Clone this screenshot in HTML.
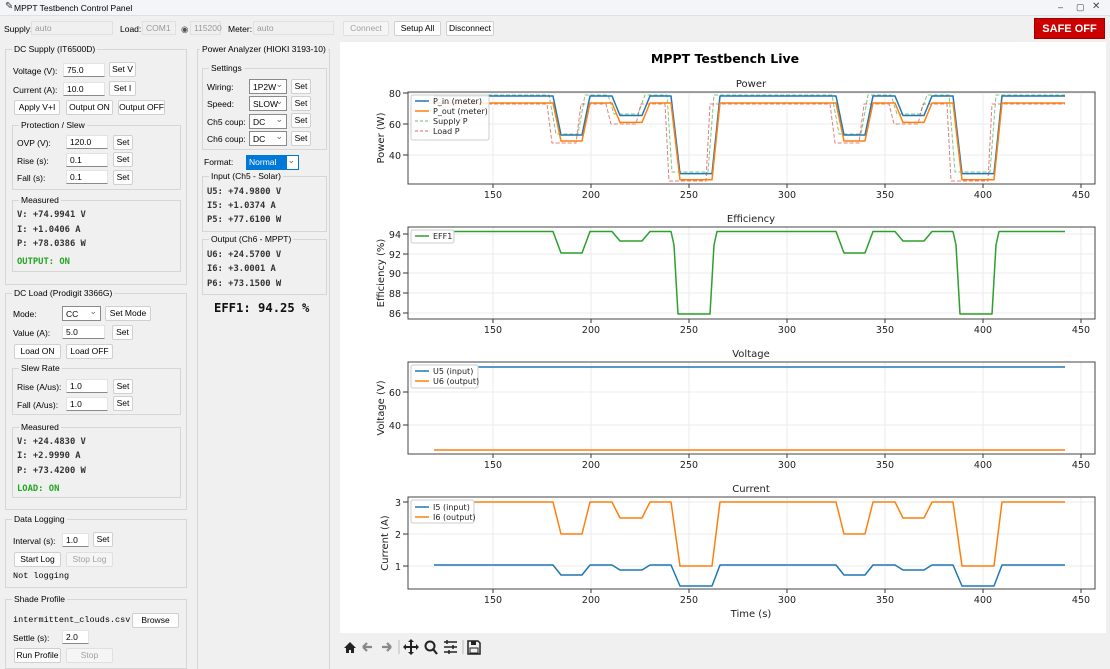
<!DOCTYPE html>
<html><head><meta charset="utf-8"><style>
*{box-sizing:border-box}
body{margin:0;width:1110px;height:663px;overflow:hidden;background:#f0f0f0;font-family:"Liberation Sans",sans-serif;font-size:8.5px;color:#000;position:relative}
div,span{position:absolute;white-space:nowrap}
.l{line-height:10px}
.e{background:#fff;border:1px solid #e3e3e3;border-bottom:1px solid #8a8a8a;height:14px;padding:1px 3px;line-height:11px}
.b{background:#fdfdfd;border:1px solid #d0d0d0;border-radius:2px;height:15px;text-align:center;line-height:13px}
.b.d{color:#a0a0a0;background:#f5f5f5;border-color:#e0e0e0}
.c{background:#fff;border:1px solid #8a8a8a;height:15px;padding:1px 3px;line-height:12px}
.c:after{content:"⌄";position:absolute;right:3px;top:-2px;color:#666;font-size:9px}
.f{border:1px solid #d6d6d6}
.t{background:#f0f0f0;padding:0 2px;line-height:10px;top:-6px;left:6px}
.m{font-family:"DejaVu Sans Mono","Liberation Mono",monospace;font-size:8.8px;font-weight:bold;color:#333;line-height:12px}
.g{color:#1fa51f;font-family:"DejaVu Sans Mono","Liberation Mono",monospace;font-weight:bold;font-size:8.8px}
.ro{background:#f0f0f0;border:1px solid #e0e0e0;height:14px;color:#999;padding:1px 3px;line-height:11px}
</style></head><body>
<div style="left:0;top:0;width:1110px;height:16px;background:#f3f5f9;border-bottom:1px solid #e0e0e0"></div>
<div class="l" style="left:5px;top:2px;font-size:10px;color:#333">✎</div>
<div class="l" style="left:14px;top:3px;font-size:8.5px">MPPT Testbench Control Panel</div>
<div class="l" style="left:1058px;top:2px;font-size:9px;color:#444">–</div>
<div class="l" style="left:1076px;top:2px;font-size:9px;color:#444">▢</div>
<div class="l" style="left:1092px;top:2px;font-size:10px;color:#444">✕</div>

<div class="l" style="left:4px;top:24px">Supply:</div><div class="ro" style="left:31px;top:21px;width:82px">auto</div>
<div class="l" style="left:120px;top:24px">Load:</div><div class="ro" style="left:142px;top:21px;width:34px">COM1</div>
<div class="l" style="left:181px;top:24px;color:#555">◉</div><div class="ro" style="left:190px;top:21px;width:31px">115200</div>
<div class="l" style="left:228px;top:24px">Meter:</div><div class="ro" style="left:253px;top:21px;width:81px">auto</div>
<div class="b d" style="left:343px;top:21px;width:46px">Connect</div>
<div class="b" style="left:394px;top:21px;width:47px">Setup All</div>
<div class="b" style="left:446px;top:21px;width:48px">Disconnect</div>
<div style="left:1034px;top:18px;width:71px;height:21px;background:#cc0000;color:#fff;font-weight:bold;font-size:11px;text-align:center;line-height:20px;border:1px solid #900">SAFE OFF</div>

<div class="f" style="left:5px;top:49px;width:182px;height:236px"><span class="t">DC Supply (IT6500D)</span></div>
<div class="l" style="left:13px;top:66px">Voltage (V):</div><div class="e" style="left:63px;top:63px;width:42px">75.0</div><div class="b" style="left:109px;top:62px;width:27px">Set V</div>
<div class="l" style="left:13px;top:85px">Current (A):</div><div class="e" style="left:63px;top:82px;width:42px">10.0</div><div class="b" style="left:109px;top:81px;width:27px">Set I</div>
<div class="b" style="left:14px;top:100px;width:46px">Apply V+I</div><div class="b" style="left:66px;top:100px;width:47px">Output ON</div><div class="b" style="left:118px;top:100px;width:47px">Output OFF</div>
<div class="f" style="left:12px;top:125px;width:169px;height:65px"><span class="t">Protection / Slew</span></div>
<div class="l" style="left:17px;top:138px">OVP (V):</div><div class="e" style="left:66px;top:135px;width:42px">120.0</div><div class="b" style="left:113px;top:135px;width:20px">Set</div>
<div class="l" style="left:17px;top:156px">Rise (s):</div><div class="e" style="left:66px;top:153px;width:42px">0.1</div><div class="b" style="left:113px;top:152px;width:20px">Set</div>
<div class="l" style="left:17px;top:173px">Fall (s):</div><div class="e" style="left:66px;top:170px;width:42px">0.1</div><div class="b" style="left:113px;top:170px;width:20px">Set</div>
<div class="f" style="left:12px;top:200px;width:169px;height:72px"><span class="t">Measured</span></div>
<div class="m" style="left:17px;top:209px">V: +74.9941 V</div>
<div class="m" style="left:17px;top:224px">I: +1.0406 A</div>
<div class="m" style="left:17px;top:238px">P: +78.0386 W</div>
<div class="g" style="left:17px;top:257px">OUTPUT: ON</div>

<div class="f" style="left:5px;top:293px;width:182px;height:217px"><span class="t">DC Load (Prodigit 3366G)</span></div>
<div class="l" style="left:13px;top:309px">Mode:</div><div class="c" style="left:62px;top:306px;width:39px">CC</div><div class="b" style="left:105px;top:306px;width:46px">Set Mode</div>
<div class="l" style="left:13px;top:328px">Value (A):</div><div class="e" style="left:62px;top:325px;width:43px">5.0</div><div class="b" style="left:112px;top:325px;width:21px">Set</div>
<div class="b" style="left:14px;top:344px;width:47px">Load ON</div><div class="b" style="left:66px;top:344px;width:47px">Load OFF</div>
<div class="f" style="left:12px;top:368px;width:169px;height:47px"><span class="t">Slew Rate</span></div>
<div class="l" style="left:17px;top:382px">Rise (A/us):</div><div class="e" style="left:66px;top:379px;width:42px">1.0</div><div class="b" style="left:113px;top:379px;width:20px">Set</div>
<div class="l" style="left:17px;top:400px">Fall (A/us):</div><div class="e" style="left:66px;top:397px;width:42px">1.0</div><div class="b" style="left:113px;top:396px;width:20px">Set</div>
<div class="f" style="left:12px;top:427px;width:169px;height:71px"><span class="t">Measured</span></div>
<div class="m" style="left:17px;top:436px">V: +24.4830 V</div>
<div class="m" style="left:17px;top:450px">I: +2.9990 A</div>
<div class="m" style="left:17px;top:465px">P: +73.4200 W</div>
<div class="g" style="left:17px;top:484px">LOAD: ON</div>

<div class="f" style="left:5px;top:519px;width:182px;height:69px"><span class="t">Data Logging</span></div>
<div class="l" style="left:13px;top:536px">Interval (s):</div><div class="e" style="left:62px;top:533px;width:27px">1.0</div><div class="b" style="left:93px;top:532px;width:20px">Set</div>
<div class="b" style="left:14px;top:552px;width:47px">Start Log</div><div class="b d" style="left:66px;top:552px;width:47px">Stop Log</div>
<div class="l" style="left:13px;top:571px;font-family:'Liberation Mono',monospace;font-size:8.5px">Not logging</div>

<div class="f" style="left:5px;top:599px;width:182px;height:70px"><span class="t">Shade Profile</span></div>
<div class="l" style="left:13px;top:615px;font-family:'Liberation Mono',monospace;font-size:8.5px">intermittent_clouds.csv</div><div class="b" style="left:132px;top:613px;width:47px">Browse</div>
<div class="l" style="left:13px;top:633px">Settle (s):</div><div class="e" style="left:62px;top:630px;width:27px">2.0</div>
<div class="b" style="left:14px;top:648px;width:47px">Run Profile</div><div class="b d" style="left:66px;top:648px;width:47px">Stop</div>

<div class="f" style="left:197px;top:49px;width:133px;height:620px;border-bottom:none"><span class="t" style="left:2px">Power Analyzer (HIOKI 3193-10)</span></div>
<div class="f" style="left:202px;top:68px;width:125px;height:82px"><span class="t">Settings</span></div>
<div class="l" style="left:207px;top:82px">Wiring:</div><div class="c" style="left:249px;top:79px;width:38px">1P2W</div><div class="b" style="left:291px;top:79px;width:20px">Set</div>
<div class="l" style="left:207px;top:99px">Speed:</div><div class="c" style="left:249px;top:96px;width:38px">SLOW</div><div class="b" style="left:291px;top:96px;width:20px">Set</div>
<div class="l" style="left:207px;top:117px">Ch5 coup:</div><div class="c" style="left:249px;top:114px;width:38px">DC</div><div class="b" style="left:291px;top:113px;width:20px">Set</div>
<div class="l" style="left:207px;top:134px">Ch6 coup:</div><div class="c" style="left:249px;top:131px;width:38px">DC</div><div class="b" style="left:291px;top:131px;width:20px">Set</div>
<div class="l" style="left:204px;top:157px">Format:</div><div class="c" style="left:246px;top:155px;width:53px;border-color:#0078d7"><span style="left:0;top:0;width:40px;height:13px;background:#0078d7;color:#fff;padding-left:2px;line-height:12px">Normal</span></div>
<div class="f" style="left:202px;top:176px;width:125px;height:56px"><span class="t">Input (Ch5 - Solar)</span></div>
<div class="m" style="left:207px;top:186px">U5: +74.9800 V</div>
<div class="m" style="left:207px;top:200px">I5:  +1.0374 A</div>
<div class="m" style="left:207px;top:214px">P5: +77.6100 W</div>
<div class="f" style="left:202px;top:239px;width:125px;height:56px"><span class="t">Output (Ch6 - MPPT)</span></div>
<div class="m" style="left:207px;top:249px">U6: +24.5700 V</div>
<div class="m" style="left:207px;top:263px">I6:  +3.0001 A</div>
<div class="m" style="left:207px;top:278px">P6: +73.1500 W</div>
<div class="m" style="left:214px;top:301px;font-size:12.2px;line-height:15px;color:#111">EFF1: 94.25 %</div>

<div style="left:340px;top:42px;width:766px;height:591px;background:#fff"></div>
<svg style="position:absolute;left:0;top:0" width="1110" height="663" font-family="DejaVu Sans, sans-serif" font-size="9.5" fill="#222">
<text x="725" y="63" text-anchor="middle" font-weight="bold" font-size="12.5" fill="#000">MPPT Testbench Live</text>
<g stroke="#ebebeb" stroke-width="1">
<path d="M493 92V184M591 92V184M689 92V184M787 92V184M885 92V184M983 92V184M1081 92V184M408 93H1095M408 124H1095M408 155H1095"/>
<path d="M493 227V319M591 227V319M689 227V319M787 227V319M885 227V319M983 227V319M1081 227V319M408 234H1095M408 254H1095M408 273H1095M408 293H1095M408 313H1095"/>
<path d="M493 362V454M591 362V454M689 362V454M787 362V454M885 362V454M983 362V454M1081 362V454M408 392H1095M408 425H1095"/>
<path d="M493 497V589M591 497V589M689 497V589M787 497V589M885 497V589M983 497V589M1081 497V589M408 502H1095M408 534H1095M408 566H1095"/>
</g>
<g font-size="10" text-anchor="middle">
<text x="751" y="87">Power</text><text x="751" y="222">Efficiency</text><text x="751" y="357">Voltage</text><text x="751" y="492">Current</text>
<text x="751" y="617">Time (s)</text>
</g>
<g text-anchor="middle">
<g id="xt"><text x="493" y="198">150</text><text x="591" y="198">200</text><text x="689" y="198">250</text><text x="787" y="198">300</text><text x="885" y="198">350</text><text x="983" y="198">400</text><text x="1081" y="198">450</text></g>
<use href="#xt" y="135"/><use href="#xt" y="270"/><use href="#xt" y="405"/>
</g>
<g text-anchor="end">
<text x="401" y="97">80</text><text x="401" y="128">60</text><text x="401" y="159">40</text>
<text x="401" y="238">94</text><text x="401" y="258">92</text><text x="401" y="277">90</text><text x="401" y="297">88</text><text x="401" y="317">86</text>
<text x="401" y="396">60</text><text x="401" y="429">40</text>
<text x="401" y="506">3</text><text x="401" y="538">2</text><text x="401" y="570">1</text>
</g>
<g font-size="10">
<text transform="translate(384,138) rotate(-90)" text-anchor="middle">Power (W)</text>
<text transform="translate(384,273) rotate(-90)" text-anchor="middle">Efficiency (%)</text>
<text transform="translate(384,408) rotate(-90)" text-anchor="middle">Voltage (V)</text>
<text transform="translate(388,543) rotate(-90)" text-anchor="middle">Current (A)</text>
</g>
<g stroke="#333" stroke-width="1">
<path d="M403 93h5M403 124h5M403 155h5M403 234h5M403 254h5M403 273h5M403 293h5M403 313h5M403 392h5M403 425h5M403 502h5M403 534h5M403 566h5"/>
<path d="M493 184v4M591 184v4M689 184v4M787 184v4M885 184v4M983 184v4M1081 184v4M493 319v4M591 319v4M689 319v4M787 319v4M885 319v4M983 319v4M1081 319v4M493 454v4M591 454v4M689 454v4M787 454v4M885 454v4M983 454v4M1081 454v4M493 589v4M591 589v4M689 589v4M787 589v4M885 589v4M983 589v4M1081 589v4"/>
</g>
<g fill="none" stroke-width="1.5" stroke-linejoin="round">
<polyline stroke="#2ca02c" stroke-dasharray="4,2" stroke-width="1" opacity=".6" points="434,95 549,95 556,134 578,134 585,95 608,95 614,114 638,114 645,95 667,95 672,172 708,172 714,95 832,95 839,134 861,134 868,95 891,95 897,114 920,114 927,95 949,95 955,172 990,172 996,95 1065,95"/>
<polyline stroke="#d62728" stroke-dasharray="4,2" stroke-width="1" opacity=".6" points="434,104 547,104 552,143 576,143 581,104 606,104 611,124 636,124 641,104 665,104 669,181 706,181 710,104 830,104 835,143 859,143 864,104 889,104 894,124 918,124 923,104 947,104 951,181 988,181 992,104 1065,104"/>
<polyline stroke="#1f77b4" points="434,96 553,96 561,135 582,135 590,96 612,96 620,115.5 642,115.5 650,96 671,96 680,173.6 712,173.6 720,96 836,96 844,135 865,135 873,96 895,96 903,115.5 924,115.5 932,96 953,96 962,173.6 994,173.6 1002,96 1065,96"/>
<polyline stroke="#ff7f0e" points="434,103 553,103 561,141 582,141 590,103 612,103 620,122.4 642,122.4 650,103 671,103 680,179.8 712,179.8 720,103 836,103 844,141 865,141 873,103 895,103 903,122.4 924,122.4 932,103 953,103 962,179.8 994,179.8 1002,103 1065,103"/>
<polyline stroke="#2ca02c" points="434,231.5 553,231.5 561,253 582,253 590,231.5 612,231.5 620,241 642,241 650,231.5 671,231.5 674,245 678,314 710,314 714,245 717,231.5 836,231.5 844,253 865,253 873,231.5 895,231.5 903,241 924,241 932,231.5 953,231.5 956,245 960,314 992,314 996,245 999,231.5 1065,231.5"/>
<polyline stroke="#1f77b4" points="434,367 1065,367"/>
<polyline stroke="#ff7f0e" points="434,450 1065,450"/>
<polyline stroke="#ff7f0e" points="434,502 553,502 561,534 582,534 590,502 612,502 620,518 642,518 650,502 671,502 680,566 712,566 720,502 836,502 844,534 865,534 873,502 895,502 903,518 924,518 932,502 953,502 962,566 994,566 1002,502 1065,502"/>
<polyline stroke="#1f77b4" points="434,565 553,565 561,575 582,575 590,565 612,565 620,570 642,570 650,565 671,565 680,586 712,586 720,565 836,565 844,575 865,575 873,565 895,565 903,570 924,570 932,565 953,565 962,586 994,586 1002,565 1065,565"/>
</g>
<g fill="none" stroke="#444" stroke-width="1">
<rect x="408" y="92" width="687" height="92"/><rect x="408" y="227" width="687" height="92"/><rect x="408" y="362" width="687" height="92"/><rect x="408" y="497" width="687" height="92"/>
</g>
<g font-size="8">
<rect x="411" y="95" width="78" height="45" fill="#fff" fill-opacity=".85" stroke="#ccc" rx="2"/>
<path d="M415 101h14" stroke="#1f77b4" stroke-width="1.5"/><text x="433" y="104">P_in (meter)</text>
<path d="M415 111h14" stroke="#ff7f0e" stroke-width="1.5"/><text x="433" y="114">P_out (meter)</text>
<path d="M415 121h14" stroke="#2ca02c" stroke-dasharray="3,2" opacity=".7"/><text x="433" y="124">Supply P</text>
<path d="M415 131h14" stroke="#d62728" stroke-dasharray="3,2" opacity=".7"/><text x="433" y="134">Load P</text>
<rect x="411" y="230" width="43" height="13" fill="#fff" stroke="#ccc" rx="2"/>
<path d="M415 236h14" stroke="#2ca02c" stroke-width="1.5"/><text x="433" y="239">EFF1</text>
<rect x="411" y="365" width="67" height="23" fill="#fff" stroke="#ccc" rx="2"/>
<path d="M415 371h14" stroke="#1f77b4" stroke-width="1.5"/><text x="433" y="374">U5 (input)</text>
<path d="M415 381h14" stroke="#ff7f0e" stroke-width="1.5"/><text x="433" y="384">U6 (output)</text>
<rect x="411" y="500" width="63" height="23" fill="#fff" stroke="#ccc" rx="2"/>
<path d="M415 507h14" stroke="#1f77b4" stroke-width="1.5"/><text x="433" y="510">I5 (input)</text>
<path d="M415 517h14" stroke="#ff7f0e" stroke-width="1.5"/><text x="433" y="520">I6 (output)</text>
</g>
<g fill="#222">
<path d="M344 648l6-6 6 6h-2v5h-3v-3h-2v3h-3v-5z"/>
<path d="M363 647h9M363 647l4-4M363 647l4 4" stroke="#888" stroke-width="2.2" fill="none"/>
<path d="M391 647h-9M391 647l-4-4M391 647l-4 4" stroke="#888" stroke-width="2.2" fill="none"/>
<path d="M399 640v14" stroke="#bbb"/>
<path d="M411 640v14M404 647h14" stroke="#222" stroke-width="2" fill="none"/>
<path d="M411 639l-3 3h6zM411 655l-3-3h6zM403 647l3-3v6zM419 647l-3-3v6z"/>
<circle cx="430" cy="646" r="4.5" fill="none" stroke="#222" stroke-width="2"/><path d="M433 649l4 5" stroke="#222" stroke-width="2.2"/>
<path d="M444 642h13M444 647h13M444 652h13" stroke="#222" stroke-width="1.5"/><path d="M447 640v4M453 645v4M449 650v4" stroke="#222" stroke-width="1.5"/>
<path d="M463 640v14" stroke="#bbb"/>
<path d="M468 641h10l2 2v11h-12z" fill="none" stroke="#222" stroke-width="1.5"/><rect x="471" y="641" width="5" height="4"/><rect x="470" y="648" width="8" height="5" fill="none" stroke="#222"/>
</g>
</svg>
</body></html>
